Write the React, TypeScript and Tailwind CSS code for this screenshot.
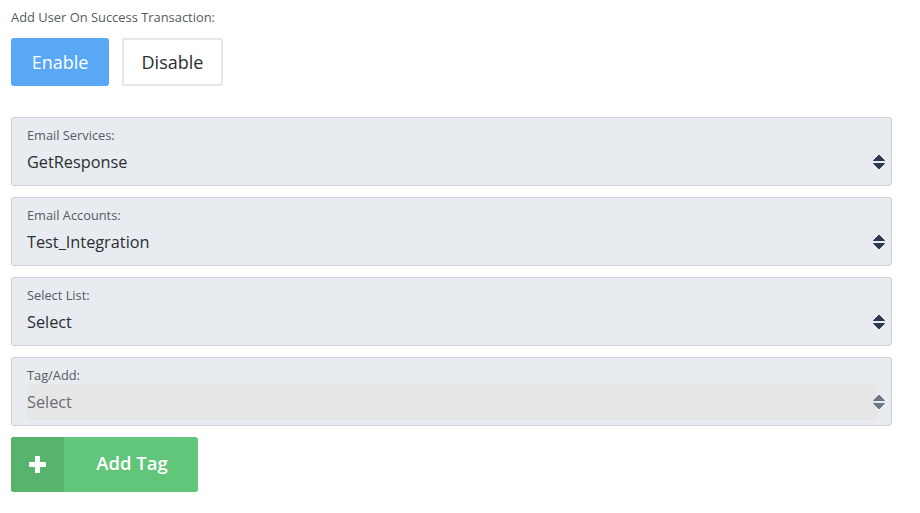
import React from "react";

const Arrows = ({ color }: { color: string }) => (
  <svg width="12" height="16" viewBox="0 0 12 16" className="shrink-0">
    <path d="M6 1 L11.5 6.5 L0.5 6.5 Z" fill={color} strokeLinejoin="round" stroke={color} strokeWidth="1" />
    <path d="M6 15 L11.5 9.5 L0.5 9.5 Z" fill={color} strokeLinejoin="round" stroke={color} strokeWidth="1" />
  </svg>
);

const Field = ({ label, value, disabled }: { label: string; value: string; disabled?: boolean }) => (
  <div className="relative h-[69px] rounded-[3px] border border-[#cdd2d9] bg-[#e8ebf0] pl-[15px] pr-[14px] pt-[10px]">
    <div className="text-[12.8px] leading-[15px] text-[#555b63]">{label}</div>
    <div
      className={
        "mt-[1px] flex h-[36px] items-center rounded-[3px] " + (disabled ? "bg-[#e7e7e8]" : "")
      }
    >
      <span className={"text-[16.3px] " + (disabled ? "text-[#6b6e73]" : "text-[#2b2f33]")}>{value}</span>
    </div>
    <div className="absolute right-[6px] top-[36px]">
      <Arrows color={disabled ? "#6f7787" : "#2d3a51"} />
    </div>
  </div>
);

export default function App() {
  return (
    <div className="h-[513px] w-[920px] bg-white pl-[11px] pr-[28px] pt-[9px]" style={{ fontFamily: "'Open Sans', sans-serif" }}>
      <div className="text-[12.9px] leading-[16px] text-[#555b63]">Add User On Success Transaction:</div>
      <div className="mt-[13px] flex gap-[13px]">
        <button className="flex h-[48px] w-[98px] items-center justify-center rounded-[3px] bg-[#58a8f5] text-[18px] text-white">
          Enable
        </button>
        <button className="flex h-[48px] w-[101px] items-center justify-center rounded-[2px] border-2 border-[#e6e6e6] bg-white text-[18px] text-[#2b2f33]">
          Disable
        </button>
      </div>
      <div className="mt-[31px] flex flex-col gap-[11px]">
        <Field label="Email Services:" value="GetResponse" />
        <Field label="Email Accounts:" value="Test_Integration" />
        <Field label="Select List:" value="Select" />
        <Field label="Tag/Add:" value="Select" disabled />
      </div>
      <button className="mt-[11px] flex h-[55px] w-[187px] overflow-hidden rounded-[3px] bg-[#62c67a] text-white">
        <span className="flex h-full w-[53px] items-center justify-center bg-[#56b46c]">
          <svg width="17" height="17" viewBox="0 0 17 17">
            <rect x="6" y="0" width="5" height="17" rx="0.5" fill="white" />
            <rect x="0" y="6" width="17" height="5" rx="0.5" fill="white" />
          </svg>
        </span>
        <span className="flex flex-1 items-center justify-center pb-[3px] pl-[2px] text-[18.5px] font-semibold">Add Tag</span>
      </button>
    </div>
  );
}
